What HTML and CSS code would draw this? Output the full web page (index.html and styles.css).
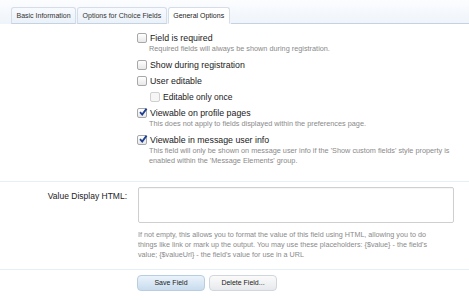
FILE: index.html
```html
<!DOCTYPE html>
<html>
<head>
<meta charset="utf-8">
<link rel="stylesheet" href="styles.css">
</head>
<body>
<div class="tabs">
  <div class="tab">Basic Information</div>
  <div class="tab">Options for Choice Fields</div>
  <div class="tab active">General Options</div>
  <div class="tab-fill"></div>
</div>
<div class="section">
  <div class="opts">
    <label class="opt"><span class="cb"></span>Field is required</label>
    <div class="hint">Required fields will always be shown during registration.</div>
    <label class="opt"><span class="cb"></span>Show during registration</label>
    <label class="opt"><span class="cb"></span>User editable</label>
    <label class="opt sub"><span class="cb dis"></span>Editable only once</label>
    <label class="opt"><span class="cb on"><svg viewBox="0 0 10 10"><path d="M2 5.2 L4.2 7.6 L8.6 1.6" fill="none" stroke="#1f3f8f" stroke-width="1.8"/></svg></span>Viewable on profile pages</label>
    <div class="hint">This does not apply to fields displayed within the preferences page.</div>
    <label class="opt"><span class="cb on"><svg viewBox="0 0 10 10"><path d="M2 5.2 L4.2 7.6 L8.6 1.6" fill="none" stroke="#1f3f8f" stroke-width="1.8"/></svg></span>Viewable in message user info</label>
    <div class="hint">This field will only be shown on message user info if the 'Show custom fields' style property is enabled within the 'Message Elements' group.</div>
  </div>
</div>
<div class="section row">
  <div class="lbl">Value Display HTML:</div>
  <div class="ctrl">
    <div class="textarea"></div>
    <div class="hint">If not empty, this allows you to format the value of this field using HTML, allowing you to do things like link or mark up the output. You may use these placeholders: {$value} - the field's value; {$valueUrl} - the field's value for use in a URL</div>
  </div>
</div>
<div class="buttons">
  <span class="btn primary">Save Field</span>
  <span class="btn">Delete Field...</span>
</div>
</body>
</html>
```
FILE: styles.css
```css
html, body { margin: 0; padding: 0; background: #fff; }
body {
  font-family: "Liberation Sans", Arial, sans-serif;
  font-size: 8.5px;
  color: #222;
  width: 469px;
  height: 300px;
  overflow: hidden;
}
.tabs {
  display: flex;
  align-items: flex-end;
  height: 24px;
  padding-left: 11px;
  background: linear-gradient(#fcfdff, #eef4fa);
}
.tab {
  height: 15px;
  line-height: 15px;
  padding: 0 4.5px;
  font-size: 7px;
  color: #333;
  border: 1px solid #d4dde8;
  border-bottom: 1px solid #c5d2e2;
  border-radius: 3px 3px 0 0;
  background: linear-gradient(#f8fbfe, #eaf1f8);
  margin-right: 1px;
}
.tab.active {
  background: #fff;
  border-bottom-color: #fff;
  color: #222;
}
.tab-fill {
  flex: 1;
  border-bottom: 1px solid #c5d2e2;
}
.section { border-bottom: 1px solid #e6eef6; }
.opts { padding: 3px 0 15px 137px; }
.opt {
  display: flex;
  align-items: center;
  height: 11px;
  margin-top: 5px;
  font-size: 8.8px;
  color: #1a1a1a;
}
.opt.sub { padding-left: 13px; font-size: 8.5px; }
.cb {
  width: 8px;
  height: 8px;
  border: 1px solid #a8a8a8;
  border-radius: 2px;
  background: linear-gradient(#fff, #e8e8e8);
  margin-right: 3px;
  position: relative;
}
.cb.dis { border-color: #d0d0d0; background: #f6f6f6; }
.cb svg { position: absolute; left: 0; top: -2px; width: 10px; height: 10px; }
.hint {
  font-size: 7.3px;
  color: #8a8a8a;
  line-height: 10px;
  padding-left: 12px;
  margin-top: 1px;
}
.opts .hint { padding-right: 14px; }
.row { display: flex; padding: 5px 0 9px; }
.lbl {
  width: 127px;
  text-align: right;
  font-size: 8.5px;
  color: #222;
  padding-top: 4px;
  flex: none;
}
.ctrl { margin-left: 11px; width: 316px; }
.textarea {
  height: 34px;
  border: 1px solid #cfcfcf;
  border-radius: 2px;
  background: #fff;
  box-shadow: inset 0 1px 1px rgba(0,0,0,0.04);
}
.ctrl .hint { padding-left: 0; margin-top: 7px; width: 290px; font-size: 7.2px; }
.buttons { display: flex; gap: 4px; padding: 5px 0 0 137px; }
.btn {
  width: 66px;
  height: 14px;
  line-height: 14px;
  text-align: center;
  font-size: 7px;
  color: #222;
  border: 1px solid #cfd6de;
  border-radius: 4px;
  background: linear-gradient(#fbfbfb, #e6e9ec);
}
.btn.primary { background: linear-gradient(#eaf3fb, #c8dcee); border-color: #b9cde0; }
```
